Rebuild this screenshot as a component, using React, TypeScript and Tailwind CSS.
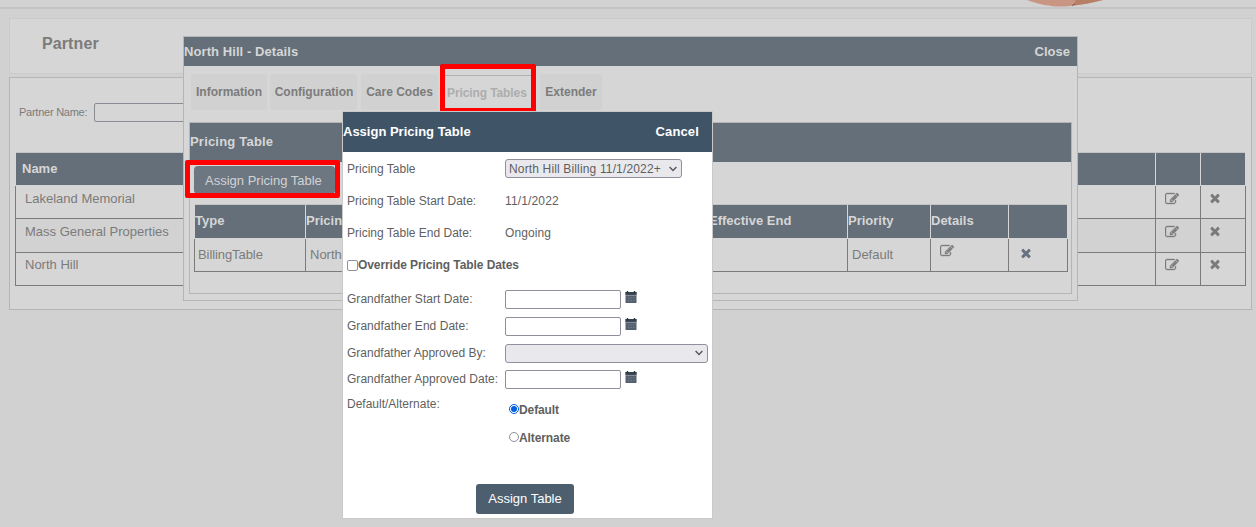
import type { ReactNode } from 'react';
import { clsx } from 'clsx';

function EditIcon({ className }: { className?: string }) {
  return (
    <svg viewBox="0 0 1792 1792" className={clsx('size-[14px] shrink-0', className)} fill="currentColor" stroke="currentColor" strokeWidth="45">
      <path d="M888 1184l116-116-152-152-116 116v56h96v96h56zm440-720q-16-16-33 1l-350 350q-17 17-1 33t33-1l350-350q17-17 1-33zm80 594v190q0 119-84.5 203.5t-203.5 84.5h-832q-119 0-203.5-84.5t-84.5-203.5v-832q0-119 84.5-203.5t203.5-84.5h832q63 0 117 25 15 7 18 23 3 17-9 29l-49 49q-14 14-32 8-23-6-45-6h-832q-66 0-113 47t-47 113v832q0 66 47 113t113 47h832q66 0 113-47t47-113v-126q0-13 9-22l64-64q15-15 35-7t20 29zm-96-738l288 288-672 672h-288v-288zm444 132l-92 92-288-288 92-92q28-28 68-28t68 28l152 152q28 28 28 68t-28 68z" />
    </svg>
  );
}

function TimesIcon({ className }: { className?: string }) {
  return (
    <svg viewBox="0 0 1792 1792" className={clsx('size-[14px] shrink-0', className)} fill="currentColor">
      <path d="M1490 1322q0 40-28 68l-136 136q-28 28-68 28t-68-28l-294-294-294 294q-28 28-68 28t-68-28l-136-136q-28-28-28-68t28-68l294-294-294-294q-28-28-28-68t28-68l136-136q28-28 68-28t68 28l294 294 294-294q28-28 68-28t68 28l136 136q28 28 28 68t-28 68l-294 294 294 294q28 28 28 68z" />
    </svg>
  );
}

function CalendarIcon() {
  return (
    <svg viewBox="0 0 12 12" className="mb-1.5 ml-1 size-3 shrink-0">
      <path d="M.5 1h11v11H.5z" fill="#556070" />
      <path d="M.5 1h11v2.8H.5z" fill="#33404e" />
      <path d="M2.5 0v2M9.5 0v2" stroke="#2b3a3a" strokeWidth="1.4" />
      <path d="M1 4.4h10" stroke="#9a9fa9" strokeWidth=".8" />
      <path d="M3 7h1.5M5.5 7h1.5M8 7h1.5M3 9.5h1.5M5.5 9.5h1.5M8 9.5h1.5" stroke="#6f7784" strokeWidth="1" />
    </svg>
  );
}

function Chevron() {
  return (
    <svg viewBox="0 0 8 6" className="h-[6px] w-2 shrink-0" fill="none" stroke="#55555c" strokeWidth="1.4">
      <path d="M.6 1l3.4 3.4L7.4 1" />
    </svg>
  );
}

const partners = ['Lakeland Memorial', 'Mass General Properties', 'North Hill'];

function PartnerTable() {
  return (
    <div className="ml-[5px] w-[1231px]">
      <div className="mb-px ml-px grid h-[33px] w-[1229px] grid-cols-[1139px_44px_44px] gap-px border-t border-[#c4c4c4] bg-[#d6d6d6] text-[13px] font-bold">
        <div className="bg-[#646f7a] pl-[6px] leading-[31px] text-[#d6d6d6]">Name</div>
        <div className="bg-[#646f7a]" />
        <div className="bg-[#646f7a]" />
      </div>
      {partners.map((name, i) => (
        <div
          key={name}
          className={clsx(
            'grid grid-cols-[1140px_45px_46px] border-b border-[#7b7b7b] text-[13px]',
            i === 1 ? 'h-[34px] bg-[#d2d2d2]' : 'h-[33px]',
            i === 2 ? 'leading-[24px]' : 'leading-[26px]',
          )}
        >
          <div className="border-l border-[#7b7b7b] pl-[9px]">{name}</div>
          <div className={clsx('border-l border-[#7b7b7b] pl-[9px]', i === 2 ? 'pt-[5px]' : 'pt-[6px]')}><EditIcon /></div>
          <div className={clsx('border-x border-[#7b7b7b] pl-[7px]', i === 2 ? 'pt-1' : 'pt-[5px]')}><TimesIcon /></div>
        </div>
      ))}
    </div>
  );
}

function Tab({ className, children }: { className: string; children: ReactNode }) {
  return (
    <div className={clsx('h-9 whitespace-nowrap rounded-[3px] bg-[#d1d1d1] text-center leading-[37px]', className)}>
      {children}
    </div>
  );
}

function DetailsDialog() {
  return (
    <div className="absolute left-[183px] top-9 h-[265px] w-[895px] border border-[#b5b5b5] bg-[#d6d6d6]">
      <div className="flex h-[29px] justify-between bg-[#646f7a] pr-[7px] text-[13px] font-bold leading-[30px] text-[#d6d6d6]">
        <span className="tracking-[0.08px]">North Hill - Details</span>
        <span>Close</span>
      </div>
      <div className="flex h-[56px] pl-[7px] pt-2 text-xs font-bold">
        <Tab className="w-[76px]">Information</Tab>
        <Tab className="ml-[3px] w-[87px] pl-px">Configuration</Tab>
        <Tab className="ml-1 w-[77px]">Care Codes</Tab>
        <div className="ml-[2px] mt-px h-9 w-[96px] border-t border-[#b0b0b0] pl-[7px] leading-[35px] tracking-[-0.1px] text-[#adadad]">Pricing Tables</div>
        <Tab className="ml-1 w-[62px]">Extender</Tab>
      </div>
      <div className="ml-[5px] h-[172px] w-[883px] border border-[#b5b5b5]">
        <div className="h-[39px] bg-[#646f7a] text-[13px] font-bold leading-[38px] tracking-[0.2px] text-[#d6d6d6]">Pricing Table</div>
        <div className="ml-1 mt-1 h-[28px] w-[141px] rounded-[4px] bg-[#6d7782] pl-[11px] text-[13px] leading-[29px] text-[#d1d3d4]">
          Assign Pricing Table
        </div>
        <div className="ml-1 mt-[10px] w-[874px]">
          <div className="ml-px grid h-[34px] w-[872px] grid-cols-[110px_402px_138px_82px_77px_58px] gap-px border-t border-[#c4c4c4] text-[13px] font-bold leading-8 text-[#d6d6d6]">
            {['Type', 'Pricing Table', 'Effective End', 'Priority', 'Details', ''].map((label) => (
              <div key={label} className="bg-[#646f7a]">{label}</div>
            ))}
          </div>
          <div className="mt-px grid h-[33px] grid-cols-[111px_403px_139px_83px_78px_60px] border-b border-[#7b7b7b] text-[13px] leading-[31px]">
            <div className="border-l border-[#7b7b7b] pl-[3px] tracking-[-0.08px]">BillingTable</div>
            <div className="border-l border-[#7b7b7b] pl-1">North</div>
            <div className="border-l border-[#7b7b7b]" />
            <div className="border-l border-[#7b7b7b] pl-1">Default</div>
            <div className="border-l border-[#7b7b7b] pl-[9px] pt-[5px]"><EditIcon /></div>
            <div className="border-x border-[#7b7b7b] pl-[10px] pt-[7px] text-[#68717f]"><TimesIcon /></div>
          </div>
        </div>
      </div>
    </div>
  );
}

function Row({ label, className, children }: { label: string; className: string; children?: ReactNode }) {
  return (
    <div className={clsx('flex items-center', className)}>
      <span className="w-[158px] shrink-0 whitespace-nowrap">{label}</span>
      {children}
    </div>
  );
}

function DateRow({ label }: { label: string }) {
  return (
    <div className="flex h-[27px] items-center">
      <span className="w-[158px] shrink-0 whitespace-nowrap pb-0.5 tracking-[0.04px]">{label}</span>
      <div className="h-[19px] w-[116px] rounded-[2px] border border-[#8f8f9d] bg-white" />
      <CalendarIcon />
    </div>
  );
}

function AssignDialog() {
  return (
    <div className="absolute left-[342px] top-[111px] h-[408px] w-[371px] border border-[#c9c9c9] bg-white text-xs text-[#5f5f5f]">
      <div className="flex h-10 justify-between bg-[#405468] pr-[13px] text-[13px] font-bold leading-[39px] text-white">
        <span>Assign Pricing Table</span>
        <span className="tracking-[0.15px]">Cancel</span>
      </div>
      <div className="pl-1">
        <Row label="Pricing Table" className="h-[33px]">
          <div className="flex h-[19px] w-[177px] items-center justify-between whitespace-nowrap rounded-[3px] border border-[#8f8f9d] bg-[#e9e9ed] pl-[3px] pr-1">
            <span className="tracking-[0.15px]">North Hill Billing 11/1/2022+</span>
            <Chevron />
          </div>
        </Row>
        <Row label="Pricing Table Start Date:" className="h-8"><span className="tracking-[0.15px]">11/1/2022</span></Row>
        <Row label="Pricing Table End Date:" className="h-8"><span className="tracking-[0.1px]">Ongoing</span></Row>
        <div className="flex h-8 items-center font-bold">
          <span className="size-[11px] rounded-[2px] border border-[#8f8f9d]" />
          <span className="tracking-[-0.08px]">Override Pricing Table Dates</span>
        </div>
        <div className="pt-[5px]">
          <DateRow label="Grandfather Start Date:" />
          <DateRow label="Grandfather End Date:" />
          <Row label="Grandfather Approved By:" className="h-[26px]">
            <div className="flex h-[19px] w-[203px] items-center justify-end rounded-[3px] border border-[#8f8f9d] bg-[#e9e9ed] pr-1">
              <Chevron />
            </div>
          </Row>
          <DateRow label="Grandfather Approved Date:" />
        </div>
        <div className="flex h-[91px] pt-1">
          <span className="w-[162px] leading-[14px]">Default/Alternate:</span>
          <div className="pt-1 font-bold tracking-[-0.1px]">
            <div className="flex h-4 items-center">
              <span className="flex size-[10px] items-center justify-center rounded-full border border-[#0060df] bg-white">
                <span className="size-[6px] rounded-full bg-[#0060df]" />
              </span>
              <span className="pt-px">Default</span>
            </div>
            <div className="mt-3 flex h-4 items-center">
              <span className="size-[10px] rounded-full border border-[#8f8f9d]" />
              <span className="pt-px">Alternate</span>
            </div>
          </div>
        </div>
      </div>
      <div className="ml-[133px] h-[30px] w-[98px] rounded-[3px] bg-[#4d5e6f] text-center text-[13px] leading-[29px] text-white">
        Assign Table
      </div>
    </div>
  );
}

export default function App() {
  return (
    <div className="relative h-[527px] w-[1256px] overflow-hidden bg-[#d1d1d1] font-['Liberation_Sans',Arial,sans-serif] text-[#7b7b7b]">
      <header className="flex h-[9px] justify-end border-b-2 border-[#c5c5c8] bg-[#d2d2d2] pr-[153px]">
        <svg viewBox="0 0 76 7" className="h-[7px] w-[76px]">
          <path d="M0 0h76C63 3 54 5 46 5.5 34 8 15 6 0 0z" fill="#c99683" />
          <path d="M49 0h27C64 3 54 5 46 5.5z" fill="#b77f66" />
          <path d="M45 5.5l3-1.5" stroke="#805a4a" />
        </svg>
      </header>
      <div className="ml-[9px] mt-[9px] h-[56px] w-[1243px] border border-[#cacaca] bg-[#d6d6d6] pl-8 text-base font-bold leading-[49px] tracking-[0.1px]">
        Partner
      </div>
      <div className="ml-[9px] mt-[3px] h-[233px] w-[1243px] border border-[#b5b5b5] bg-[#d6d6d6]">
        <div className="flex h-[74px] items-center pb-[6px] pl-[9px] text-[11px]">
          <span className="w-[75px] whitespace-nowrap tracking-[-0.25px]">Partner Name:</span>
          <span className="h-[19px] w-[150px] rounded-[2px] border border-[#8b8b94]" />
        </div>
        <PartnerTable />
      </div>

      <DetailsDialog />
      <div className="absolute left-[440px] top-16 h-[49px] w-24 rounded-[2px] border-[5px] border-[#fe0000]" />
      <div className="absolute left-[185px] top-40 h-[38px] w-[155px] rounded-[2px] border-[5px] border-[#fe0000]" />
      <AssignDialog />
    </div>
  );
}
